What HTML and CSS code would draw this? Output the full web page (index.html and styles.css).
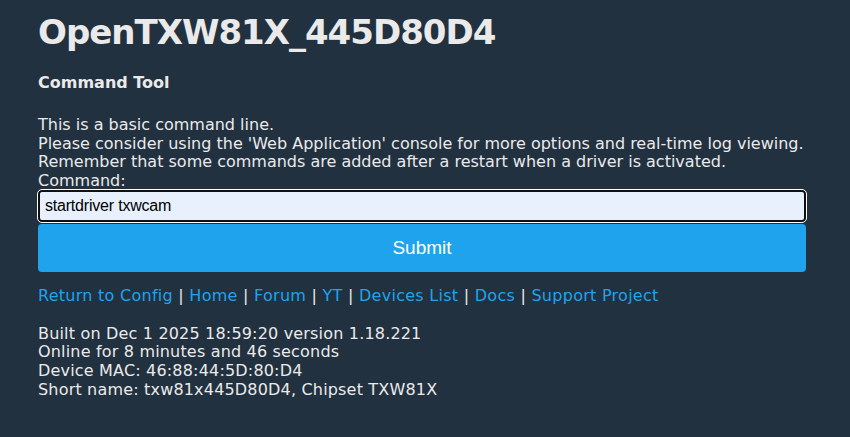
FILE: index.html
```html
<!DOCTYPE html>
<html>
<head>
<meta charset="utf-8">
<link rel="stylesheet" href="styles.css">
</head>
<body>
<div class="page">
  <h1 class="title">OpenTXW81X_445D80D4</h1>
  <h3 class="subtitle">Command Tool</h3>
  <div class="intro">
    This is a basic command line.<br>
    Please consider using the 'Web Application' console for more options and real-time log viewing.<br>
    Remember that some commands are added after a restart when a driver is activated.
  </div>
  <form class="cmdform">
    <label class="label" for="cmd">Command:</label>
    <input class="cmd" id="cmd" type="text" value="startdriver txwcam">
    <button class="submit" type="button">Submit</button>
  </form>
  <nav class="links">
    <a href="#">Return to Config</a> | <a href="#">Home</a> | <a href="#">Forum</a> | <a href="#">YT</a> | <a href="#">Devices List</a> | <a href="#">Docs</a> | <a href="#">Support Project</a>
  </nav>
  <div class="info">
    Built on Dec 1 2025 18:59:20 version 1.18.221<br>
    Online for 8 minutes and 46 seconds<br>
    Device MAC: 46:88:44:5D:80:D4<br>
    Short name: txw81x445D80D4, Chipset TXW81X
  </div>
</div>
</body>
</html>
```
FILE: styles.css
```css
html, body {
  margin: 0;
  padding: 0;
  background: #223140;
}
body {
  color: #eaeaea;
  font-family: "DejaVu Sans", Verdana, sans-serif;
  font-size: 16px;
  line-height: 18.7px;
}
.page {
  width: 768px;
  padding: 0 38px;
}
.title {
  margin: 0;
  padding-top: 12px;
  font-size: 34px;
  line-height: 40px;
  font-weight: bold;
  letter-spacing: -1px;
}
.subtitle {
  margin: 21px 0 23px;
  font-size: 16px;
  font-weight: bold;
  line-height: 20px;
}
.intro {
  margin: 0;
  white-space: nowrap;
}
.cmdform {
  display: flex;
  flex-direction: column;
}
.label {
  display: block;
}
.cmd {
  box-sizing: border-box;
  width: 768px;
  height: 32px;
  margin: -1px 0 2px;
  padding: 0 5px;
  background: #e8f0fe;
  border: 2px solid #111;
  border-radius: 4px;
  outline: 1px solid #fff;
  font-family: "Liberation Sans", Arial, sans-serif;
  font-size: 16px;
  letter-spacing: -0.2px;
  color: #000;
}
.submit {
  width: 768px;
  height: 48px;
  border: 0;
  border-radius: 4px;
  background: #1fa3ec;
  color: #fff;
  font-family: "Liberation Sans", Arial, sans-serif;
  font-size: 19px;
}
.links {
  margin-top: 15px;
  color: #eaeaea;
  letter-spacing: 0.27px;
}
.links a {
  color: #1fa3ec;
  text-decoration: none;
}
.info {
  margin-top: 19px;
  letter-spacing: 0.18px;
}
```
